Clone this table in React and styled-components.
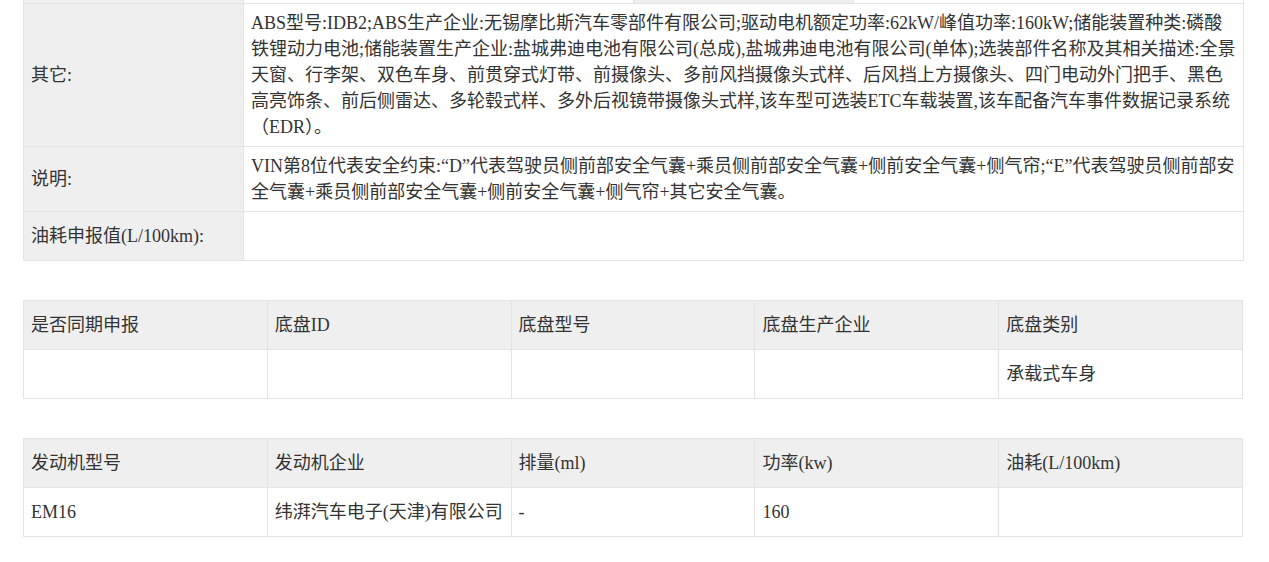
import React from "react";
import styled, { createGlobalStyle } from "styled-components";

const GlobalStyle = createGlobalStyle`
	html, body {
		margin: 0;
		padding: 0;
		background: #ffffff;
	}
	body {
		font-family: "Liberation Serif", "Noto Sans CJK SC", serif;
		color: #333333;
	}
`;

const otherText =
	"ABS型号:IDB2;ABS生产企业:无锡摩比斯汽车零部件有限公司;驱动电机额定功率:62kW/峰值功率:160kW;储能装置种类:磷酸铁锂动力电池;储能装置生产企业:盐城弗迪电池有限公司(总成),盐城弗迪电池有限公司(单体);选装部件名称及其相关描述:全景天窗、行李架、双色车身、前贯穿式灯带、前摄像头、多前风挡摄像头式样、后风挡上方摄像头、四门电动外门把手、黑色高亮饰条、前后侧雷达、多轮毂式样、多外后视镜带摄像头式样,该车型可选装ETC车载装置,该车配备汽车事件数据记录系统（EDR）。";

const noteText =
	"VIN第8位代表安全约束:“D”代表驾驶员侧前部安全气囊+乘员侧前部安全气囊+侧前安全气囊+侧气帘;“E”代表驾驶员侧前部安全气囊+乘员侧前部安全气囊+侧前安全气囊+侧气帘+其它安全气囊。";

const chassis = {
	head: ["是否同期申报", "底盘ID", "底盘型号", "底盘生产企业", "底盘类别"],
	row: ["", "", "", "", "承载式车身"],
};

const engine = {
	head: ["发动机型号", "发动机企业", "排量(ml)", "功率(kw)", "油耗(L/100km)"],
	row: ["EM16", "纬湃汽车电子(天津)有限公司", "-", "160", ""],
};

const GridTable = ({ data }) => (
	<Table>
		<colgroup>
			{data.head.map((_, i) => (
				<col key={i} style={{ width: "20%" }} />
			))}
		</colgroup>
		<tbody>
			<tr>
				{data.head.map((h, i) => (
					<HeadCell key={i}>{h}</HeadCell>
				))}
			</tr>
			<tr>
				{data.row.map((v, i) => (
					<BodyCell key={i}>{v}</BodyCell>
				))}
			</tr>
		</tbody>
	</Table>
);

const App = () => {
	return (
		<Page>
			<GlobalStyle />
			<Table>
				<colgroup>
					<col style={{ width: 220 }} />
					<col style={{ width: 390 }} />
					<col style={{ width: 220 }} />
					<col style={{ width: 390 }} />
				</colgroup>
				<tbody>
					<CutRow>
						<Label />
						<Value />
						<Label />
						<Value />
					</CutRow>
					<tr>
						<Label>其它:</Label>
						<Value colSpan={3}>{otherText}</Value>
					</tr>
					<tr>
						<Label>说明:</Label>
						<Value colSpan={3}>{noteText}</Value>
					</tr>
					<TallRow>
						<Label>油耗申报值(L/100km):</Label>
						<Value colSpan={3}></Value>
					</TallRow>
				</tbody>
			</Table>
			<GridTable data={chassis} />
			<GridTable data={engine} />
		</Page>
	);
};

export default App;

const Page = styled.div`
	width: 1220px;
	padding: 0 0 0 23px;
	display: flex;
	flex-direction: column;
	gap: 39px;
`;

const Table = styled.table`
	width: 1220px;
	table-layout: fixed;
	border-collapse: collapse;
	font-size: 18px;
	line-height: 26px;
	color: #333333;

	td {
		border: 1px solid #e4e4e4;
		vertical-align: middle;
		text-align: left;
		word-break: break-all;
	}
`;

const CutRow = styled.tr`
	td {
		height: 3px;
		padding: 0;
		border-top: none;
	}
`;

const TallRow = styled.tr`
	td {
		height: 36px;
	}
`;

const Label = styled.td`
	background-color: #efefef;
	padding: 5px 7px;
`;

const Value = styled.td`
	background-color: #ffffff;
	padding: 6px 7px;
`;

const HeadCell = styled.td`
	background-color: #efefef;
	padding: 11px 7px;
	white-space: nowrap;
`;

const BodyCell = styled.td`
	background-color: #ffffff;
	padding: 11px 7px;
	height: 26px;
	white-space: nowrap;
`;
